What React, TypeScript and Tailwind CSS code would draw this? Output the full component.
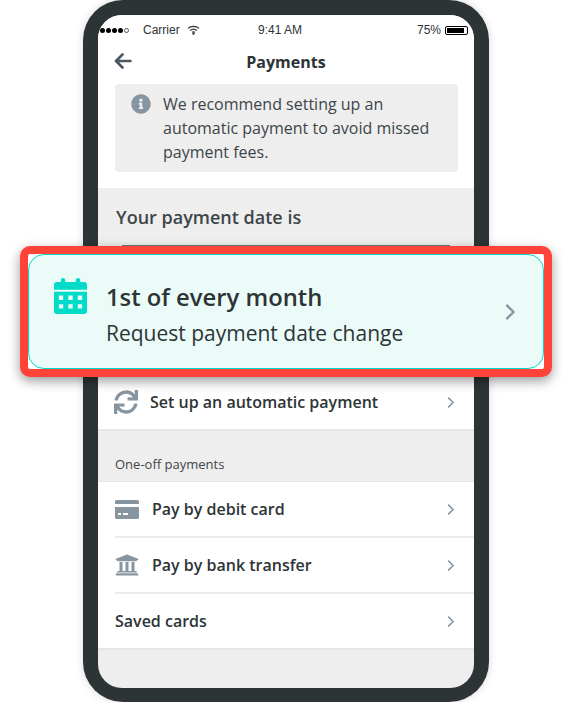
import { FaInfoCircle, FaSync, FaUniversity } from "react-icons/fa";

const Chevron = ({ className }: { className: string }) => (
	<svg viewBox="0 0 8 12" fill="none" stroke="#8795a1" strokeWidth="1.8" strokeLinecap="round" strokeLinejoin="round" className={className}>
		<path d="M1.5 1.2 6.3 6l-4.8 4.8" />
	</svg>
);

const CalendarIcon = () => (
	<svg viewBox="0 0 34 37" className="w-[33px] h-[36px]" fill="#00dcc8">
		<rect x="7" y="0" width="4.5" height="8" rx="2" />
		<rect x="22.5" y="0" width="4.5" height="8" rx="2" />
		<path d="M3 4h28a3 3 0 0 1 3 3v5H0V7a3 3 0 0 1 3-3z" />
		<path
			fillRule="evenodd"
			d="M0 14h34v20a3 3 0 0 1-3 3H3a3 3 0 0 1-3-3zM5 18v4.500h4.500v-4.500zM14.750 18v4.500h4.500v-4.500zM24.500 18v4.500h4.500v-4.500zM5 27v4.500h4.500v-4.500zM14.750 27v4.500h4.500v-4.500zM24.500 27v4.500h4.500v-4.500z"
		/>
	</svg>
);

const CardIcon = () => (
	<svg viewBox="0 0 24 19" className="w-6 h-[19px]" fill="#8795a1">
		<path d="M1.500 0h21A1.500 1.500 0 0 1 24 1.500V4H0V1.500A1.500 1.500 0 0 1 1.500 0z" />
		<path
			fillRule="evenodd"
			d="M0 7h24v10.500a1.500 1.500 0 0 1-1.500 1.500h-21A1.500 1.500 0 0 1 0 17.500zM3 13v2h3v-2zM8 13v2h5v-2z"
		/>
	</svg>
);

const Wifi = () => (
	<svg viewBox="0 0 14 10" className="w-[13px] h-[10px]" fill="none" stroke="#2d3436" strokeWidth="1.300">
		<path d="M1 3.300c3.400-3 8.600-3 12 0" />
		<path d="M3.200 5.500c2.200-1.800 5.400-1.800 7.600 0" />
		<path d="M5.300 7.500c1-.7 2.400-.7 3.400 0" />
		<circle cx="7" cy="9" r=".6" fill="#2d3436" />
	</svg>
);

const Row = ({ icon, label, line = true }: { icon?: React.ReactNode; label: string; line?: boolean }) => (
	<div className={`ml-[17px] flex items-center pr-[19px] ${line ? "h-14 border-b-2 border-[#ebebeb]" : "h-[54px]"}`}>
		{icon && <div className="w-[37px] shrink-0">{icon}</div>}
		<span className="flex-1 text-[16px] font-semibold text-[#2d3436]">{label}</span>
		<Chevron className="w-[8px] h-[11px]" />
	</div>
);

export default function App() {
	return (
		<div className="relative w-[571px] h-[702px] overflow-hidden bg-white font-['Open_Sans',sans-serif]">
			<div className="ml-[83px] w-[406px] h-[702px] bg-[#2d3436] rounded-[40px] p-[15px] pb-[14px] shadow-[0_0_8px_rgba(0,0,0,0.15)]">
				<div className="h-full rounded-[24px] overflow-hidden bg-[#eeeeee] flex flex-col">
					<div className="bg-white h-[173px] shrink-0">
						<div className="h-[30px] flex items-center pl-[2px] pr-[6px] text-[12px] text-[#2d3436] font-['Liberation_Sans',sans-serif]">
							<div className="flex items-center gap-[1px] w-[45px] shrink-0">
								<span className="size-[5px] rounded-full bg-black" />
								<span className="size-[5px] rounded-full bg-black" />
								<span className="size-[5px] rounded-full bg-black" />
								<span className="size-[5px] rounded-full bg-black" />
								<span className="size-[5px] rounded-full border border-[#555]" />
							</div>
							<span className="w-[44px] -ml-[2px]">Carrier</span>
							<Wifi />
							<span className="ml-[58px] flex-1">9:41 AM</span>
							<span>75%</span>
							<div className="ml-[4px] w-[23px] h-[9px] border border-black rounded-[2px] p-[1px]">
								<div className="w-[17px] h-full bg-black" />
							</div>
						</div>
						<div className="h-[39px] relative flex items-center justify-center">
							<svg viewBox="0 0 18 16" className="absolute left-[16px] top-[8px] w-[18px] h-4" fill="none" stroke="#4b5763" strokeWidth="2.600" strokeLinecap="round" strokeLinejoin="round">
								<path d="M16.500 8H2M8.500 1.500 2 8l6.500 6.500" />
							</svg>
							<span className="text-[16px] font-bold text-[#2d3436] -mt-[6px]">Payments</span>
						</div>
						<div className="mx-[17px] w-[343px] h-[88px] rounded-[4px] bg-[#eeeeee] flex pl-[16px] pt-[8px] gap-[12px]">
							<FaInfoCircle className="size-5 text-[#8795a1] mt-[2px] shrink-0" />
							<p className="text-[16px] leading-[24px] text-[#3d4549]">
								We recommend setting up an
								<br />
								automatic payment to avoid missed
								<br />
								payment fees.
							</p>
						</div>
					</div>

					<div className="h-[57px] shrink-0 pl-[18px] pt-[2px] flex items-center">
						<span className="text-[18px] font-semibold text-[#3d4549]">Your payment date is</span>
					</div>
					<div className="h-[2px] shrink-0 ml-[24px] mr-[24px] bg-[#6b8078]" />
					<div className="h-[184px] shrink-0 bg-white border-b-2 border-[#e6e6e6] flex flex-col justify-end pl-4 pr-[19px] pb-[15px]">
						<div className="flex items-center h-[24px]">
							<FaSync className="size-6 text-[#8795a1] mr-3 shrink-0" />
							<span className="flex-1 text-[16px] font-semibold text-[#2d3436]">Set up an automatic payment</span>
							<Chevron className="w-[8px] h-[11px]" />
						</div>
					</div>
					<div className="h-[50px] shrink-0 pl-[17px] flex items-end pb-[7px]">
						<span className="text-[13px] text-[#3d4549]">One-off payments</span>
					</div>
					<div className="bg-white border-t border-b-2 border-[#e6e6e6]">
						<Row icon={<CardIcon />} label="Pay by debit card" />
						<Row icon={<FaUniversity className="size-6 text-[#8795a1]" />} label="Pay by bank transfer" />
						<Row label="Saved cards" line={false} />
					</div>
				</div>
			</div>

			<div className="absolute left-[20px] top-[246px] w-[532px] h-[131px] rounded-[10px] border-[8px] border-[#ff4338] bg-white shadow-[0_4px_12px_rgba(0,0,0,0.4)]">
				<div className="h-full rounded-[16px] border-[1.500px] border-[#00dcc8] bg-[#ebfbf8] flex pl-[25px] pr-[27px]">
					<div className="pt-[23px] w-[52px] shrink-0">
						<CalendarIcon />
					</div>
					<div className="flex-1 pt-[24px]">
						<div className="text-[23.800px] leading-[36px] font-semibold text-[#2d3436]">1st of every month</div>
						<div className="text-[21px] leading-[36px] text-[#2d3436]">Request payment date change</div>
					</div>
					<div className="flex items-center">
						<Chevron className="w-[11px] h-4" />
					</div>
				</div>
			</div>
		</div>
	);
}
